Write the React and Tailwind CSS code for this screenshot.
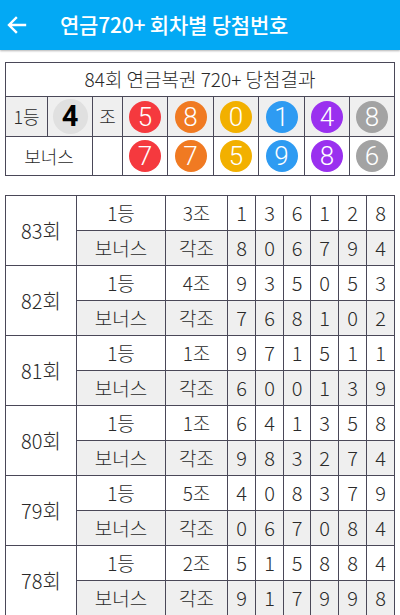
import React from "react";

const balls1 = [
  { n: 5, c: "bg-[#f5393e]" },
  { n: 8, c: "bg-[#f07a22]" },
  { n: 0, c: "bg-[#f2b000]" },
  { n: 1, c: "bg-[#2e9bf2]" },
  { n: 4, c: "bg-[#9a30ef]" },
  { n: 8, c: "bg-[#a3a3a3]" },
];
const balls2 = [
  { n: 7, c: "bg-[#f5393e]" },
  { n: 7, c: "bg-[#f07a22]" },
  { n: 5, c: "bg-[#f2b000]" },
  { n: 9, c: "bg-[#2e9bf2]" },
  { n: 8, c: "bg-[#9a30ef]" },
  { n: 6, c: "bg-[#a3a3a3]" },
];

const rounds = [
  { r: "83회", jo: "3조", a: [1, 3, 6, 1, 2, 8], b: [8, 0, 6, 7, 9, 4] },
  { r: "82회", jo: "4조", a: [9, 3, 5, 0, 5, 3], b: [7, 6, 8, 1, 0, 2] },
  { r: "81회", jo: "1조", a: [9, 7, 1, 5, 1, 1], b: [6, 0, 0, 1, 3, 9] },
  { r: "80회", jo: "1조", a: [6, 4, 1, 3, 5, 8], b: [9, 8, 3, 2, 7, 4] },
  { r: "79회", jo: "5조", a: [4, 0, 8, 3, 7, 9], b: [0, 6, 7, 0, 8, 4] },
  { r: "78회", jo: "2조", a: [5, 1, 5, 8, 8, 4], b: [9, 1, 7, 9, 9, 8] },
];

const bd = "border-[1.5px] border-[#4a4858]";

function Ball({ n, c }) {
  return (
    <div
      className={`mx-auto flex h-[32px] w-[32px] items-center justify-center rounded-full ${c} text-[26px] leading-none text-white`}
      style={{ fontFamily: "Roboto, 'Noto Sans', sans-serif" }}
    >
      {n}
    </div>
  );
}

export default function App() {
  return (
    <div
      className="h-[615px] w-[400px] overflow-hidden bg-white font-light text-[#2a2a2a]"
      style={{ fontFamily: "'Noto Sans CJK KR', 'Noto Sans', sans-serif" }}
    >
      <div className="relative flex h-[50px] items-center bg-[#03a9f4] text-white shadow-[0_1px_2px_rgba(0,0,0,0.3)]">
        <svg
          className="ml-[5px] h-[24px] w-[24px]"
          viewBox="0 0 24 24"
          fill="none"
          stroke="white"
          strokeWidth="2.4"
          strokeLinecap="square"
        >
          <path d="M20 12H5M11 5l-7 7 7 7" />
        </svg>
        <div className="ml-[31px] text-[21px] font-medium tracking-[-0.2px]">
          연금720+ 회차별 당첨번호
        </div>
      </div>

      <div className="px-[5px] pt-[12px]">
        <table className={`w-[389px] table-fixed border-collapse ${bd}`}>
          <colgroup>
            <col className="w-[42px]" />
            <col className="w-[45px]" />
            <col className="w-[30px]" />
            <col className="w-[45px]" />
            <col className="w-[46px]" />
            <col className="w-[45px]" />
            <col className="w-[46px]" />
            <col className="w-[45px]" />
            <col className="w-[45px]" />
          </colgroup>
          <tbody>
            <tr className="h-[34px]">
              <td colSpan={9} className={`${bd} text-center text-[19px]`}>
                84회 연금복권 720+ 당첨결과
              </td>
            </tr>
            <tr className="h-[40px] bg-[#efefef]">
              <td className={`${bd} text-center text-[18px]`}>1등</td>
              <td className={`${bd}`}>
                <div
                  className="mx-auto flex h-[35px] w-[35px] items-center justify-center rounded-full bg-[#e0e0e0] text-[29px] font-bold leading-none text-black"
                  style={{ fontFamily: "Roboto, sans-serif" }}
                >
                  4
                </div>
              </td>
              <td className={`${bd} text-center text-[18px]`}>조</td>
              {balls1.map((b, i) => (
                <td key={i} className={`${bd}`}>
                  <Ball {...b} />
                </td>
              ))}
            </tr>
            <tr className="h-[39px]">
              <td colSpan={2} className={`${bd} text-center text-[18px]`}>
                보너스
              </td>
              <td className={`${bd}`}></td>
              {balls2.map((b, i) => (
                <td key={i} className={`${bd}`}>
                  <Ball {...b} />
                </td>
              ))}
            </tr>
          </tbody>
        </table>

        <table className={`mt-[19px] w-[389px] table-fixed border-collapse ${bd}`}>
          <colgroup>
            <col className="w-[71px]" />
            <col className="w-[89px]" />
            <col className="w-[62px]" />
            <col className="w-[28px]" />
            <col className="w-[28px]" />
            <col className="w-[27px]" />
            <col className="w-[28px]" />
            <col className="w-[28px]" />
            <col className="w-[28px]" />
          </colgroup>
          <tbody>
            {rounds.map((g) => (
              <React.Fragment key={g.r}>
                <tr className="h-[35px] text-[19px]">
                  <td rowSpan={2} className={`${bd} text-center text-[20px]`}>
                    {g.r}
                  </td>
                  <td className={`${bd} text-center`}>1등</td>
                  <td className={`${bd} text-center`}>{g.jo}</td>
                  {g.a.map((d, i) => (
                    <td key={i} className={`${bd} text-center text-[20px]`}>
                      {d}
                    </td>
                  ))}
                </tr>
                <tr className="h-[35px] bg-[#efefef] text-[19px]">
                  <td className={`${bd} text-center`}>보너스</td>
                  <td className={`${bd} text-center`}>각조</td>
                  {g.b.map((d, i) => (
                    <td key={i} className={`${bd} text-center text-[20px]`}>
                      {d}
                    </td>
                  ))}
                </tr>
              </React.Fragment>
            ))}
          </tbody>
        </table>
      </div>
    </div>
  );
}
